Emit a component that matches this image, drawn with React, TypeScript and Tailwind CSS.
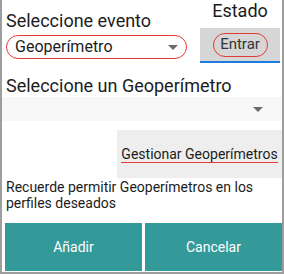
import React from 'react';

function Caret({ className }: { className?: string }) {
    return (
        <svg width="10" height="5" viewBox="0 0 10 5" className={className}>
            <path d="M0 0 L10 0 L5 5 Z" fill="#6b6b6b" />
        </svg>
    );
}

export default function App() {
    return (
        <div
            className="w-[284px] h-[274px] bg-white border-x-2 border-b-2 border-[#9e9e9e] flex flex-col text-[#1c1c1c] overflow-hidden"
            style={{ fontFamily: 'Roboto, "Noto Sans", sans-serif' }}
        >
            {/* Top row: event selector + status */}
            <div className="flex">
                <div className="flex-1 flex flex-col pl-[4px]">
                    <div className="text-[18px] leading-[22px] mt-[10px]">Seleccione evento</div>
                    <div className="mt-[3px] w-[181px] h-[24px] rounded-full border border-[#e53935] flex items-center justify-between pl-[8px] pr-[8px]">
                        <span className="text-[16px]">Geoperímetro</span>
                        <Caret />
                    </div>
                </div>
                <div className="w-[82px] flex flex-col items-center pr-[2px]">
                    <div className="text-[18px] leading-[20px] mt-[1px]">Estado</div>
                    <div className="mt-[7px] w-full h-[35px] bg-[#d6d6d6] border-b-[2px] border-[#1e7be0] flex items-center justify-center">
                        <div className="w-[55px] h-[24px] rounded-full border border-[#e53935] flex items-center justify-center text-[15px] text-[#333]">
                            Entrar
                        </div>
                    </div>
                </div>
            </div>

            {/* Geofence selector */}
            <div className="text-[18px] leading-[22px] mt-[12px] pl-[4px]">Seleccione un Geoperímetro</div>
            <div className="h-[24px] bg-[#f8f8f8] flex items-center justify-end pr-[19px]">
                <Caret />
            </div>

            {/* Manage button */}
            <div className="flex justify-end mt-[9px]">
                <div className="w-[165px] h-[48px] bg-[#eeeeee] flex items-center justify-center">
                    <span className="text-[14px] border-b border-[#e53935] leading-[16px] whitespace-nowrap">Gestionar Geoperímetros</span>
                </div>
            </div>

            <p className="text-[14px] leading-[16px] pl-[4px] mt-[1px]">
                Recuerde permitir Geoperímetros en los perfiles deseados
            </p>

            {/* Action buttons */}
            <div className="flex gap-[3px] mt-auto pl-[3px] pb-[1px]">
                <button className="flex-1 h-[48px] bg-[#339999] text-white text-[14px]">Añadir</button>
                <button className="flex-1 h-[48px] bg-[#339999] text-white text-[14px]">Cancelar</button>
            </div>
        </div>
    );
}
